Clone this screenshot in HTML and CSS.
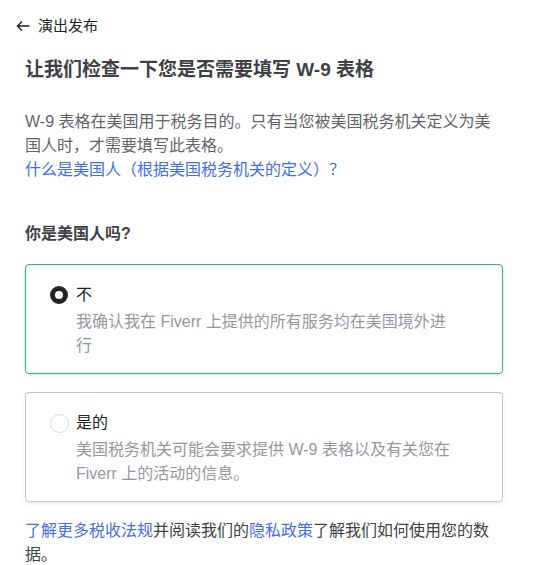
FILE: index.html
```html
<!DOCTYPE html>
<html lang="zh-CN">

<head>
    <meta charset="UTF-8">
    <meta name="viewport" content="width=device-width, initial-scale=1.0">
    <title>W-9 表格</title>
    <link rel="stylesheet" href="styles.css">
</head>

<body>
    <div class="topbar">
        <a class="back" href="#">
            <svg class="arrow" width="14" height="12" viewBox="0 0 14 12">
                <path d="M13.5 6H1.5M6 1.5L1.5 6L6 10.5" fill="none" stroke="#222325" stroke-width="1.5" />
            </svg>
            <span>演出发布</span>
        </a>
    </div>
    <div class="content">
        <h1 class="title">让我们检查一下您是否需要填写 W-9 表格</h1>
        <p class="intro">
            W-9 表格在美国用于税务目的。只有当您被美国税务机关定义为美国人时，才需要填写此表格。
            <a class="link block" href="#">什么是美国人（根据美国税务机关的定义）？</a>
        </p>

        <div class="question">你是美国人吗?</div>

        <label class="option selected">
            <span class="radio"></span>
            <span class="option-text">
                <span class="option-label">不</span>
                <span class="option-desc">我确认我在 Fiverr 上提供的所有服务均在美国境外进行</span>
            </span>
        </label>

        <label class="option">
            <span class="radio"></span>
            <span class="option-text">
                <span class="option-label">是的</span>
                <span class="option-desc">美国税务机关可能会要求提供 W-9 表格以及有关您在 Fiverr 上的活动的信息。</span>
            </span>
        </label>

        <p class="footer-note">
            <a class="link" href="#">了解更多税收法规</a>并阅读我们的<a class="link" href="#">隐私政策</a>了解我们如何使用您的数据。
        </p>
    </div>
</body>

</html>
```

FILE: styles.css
```css
body {
    margin: 0;
    background-color: #ffffff;
    font-family: "Liberation Sans", "Noto Sans CJK SC", sans-serif;
    color: #404145;
}

.topbar {
    padding: 14px 16px 0;
}

.back {
    display: inline-flex;
    align-items: center;
    gap: 8px;
    font-size: 15px;
    line-height: 24px;
    color: #222325;
    text-decoration: none;
}

.arrow {
    display: block;
}

.content {
    width: 478px;
    padding: 0 25px;
}

.title {
    margin: 18px 0 0;
    font-size: 19px;
    line-height: 28px;
    font-weight: 700;
    color: #404145;
}

.intro {
    margin: 26px 0 0;
    font-size: 16px;
    line-height: 24px;
    color: #62646a;
}

.link {
    color: #446ee7;
    text-decoration: none;
}

.link.block {
    display: block;
}

.question {
    margin-top: 40px;
    font-size: 16px;
    line-height: 24px;
    font-weight: 700;
    color: #404145;
}

.option {
    display: flex;
    align-items: flex-start;
    box-sizing: border-box;
    margin-top: 18px;
    padding: 18px 24px 15px;
    border: 1px solid #c5c6c9;
    border-radius: 4px;
    box-shadow: 0 2px 4px rgba(0, 0, 0, 0.08);
    cursor: pointer;
}

.option + .option {
    margin-top: 18px;
}

.option.selected {
    border-color: #1dbf73;
}

.radio {
    flex: none;
    width: 19px;
    height: 19px;
    margin: 3px 7px 0 0;
    box-sizing: border-box;
    border: 1px solid #dadbdd;
    border-radius: 50%;
    background-color: #ffffff;
}

.option.selected .radio {
    width: 18px;
    height: 18px;
    margin: 3px 8px 0 0;
    border: 5px solid #222325;
}

.option-text {
    display: flex;
    flex-direction: column;
}

.option-label {
    font-size: 16px;
    line-height: 24px;
    color: #222325;
}

.option-desc {
    max-width: 382px;
    margin-top: 3px;
    font-size: 16px;
    line-height: 24px;
    color: #95979d;
}

.footer-note {
    margin: 17px 0 0;
    font-size: 16px;
    line-height: 24px;
    color: #404145;
}
```
